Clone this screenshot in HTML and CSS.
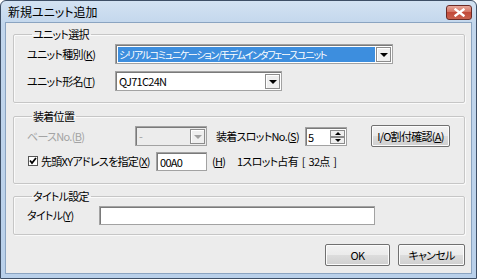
FILE: index.html
```html
<!DOCTYPE html>
<html lang="ja">
<head>
    <meta charset="UTF-8">
    <title>新規ユニット追加</title>
    <link rel="stylesheet" href="styles.css">
</head>
<body>
    <div class="window">
        <div class="titlebar">
            <span class="title">新規ユニット追加</span>
            <span class="close">
                <svg width="11" height="9" viewBox="0 0 11 9">
                    <path d="M1.5 1.5 L9.5 7.5 M9.5 1.5 L1.5 7.5" stroke="#fff" stroke-width="2.4" stroke-linecap="square"/>
                </svg>
            </span>
        </div>
        <div class="client">
            <!-- ユニット選択 -->
            <fieldset class="group g-unit">
                <legend>ユニット選択</legend>
                <div class="row">
                    <span class="label w-unit">ユニット種別(<u>K</u>)</span>
                    <div class="combo combo-type">
                        <span class="combo-text selected">シリアルコミュニケーション/モデムインタフェースユニット</span>
                        <span class="drop"><i class="tri"></i></span>
                    </div>
                </div>
                <div class="row">
                    <span class="label w-unit">ユニット形名(<u>T</u>)</span>
                    <div class="combo combo-model">
                        <span class="combo-text">QJ71C24N</span>
                        <span class="drop"><i class="tri"></i></span>
                    </div>
                </div>
            </fieldset>

            <!-- 装着位置 -->
            <fieldset class="group g-pos">
                <legend>装着位置</legend>
                <div class="row row-slot">
                    <span class="label w-base disabled">ベースNo.(<u>B</u>)</span>
                    <div class="combo combo-base is-disabled">
                        <span class="combo-text">-</span>
                        <span class="drop"><i class="tri"></i></span>
                    </div>
                    <span class="label w-slot">装着スロットNo.(<u>S</u>)</span>
                    <div class="spin">
                        <span class="spin-text">5</span>
                        <span class="spin-btns">
                            <span class="spin-btn"><i class="tri-up"></i></span>
                            <span class="spin-btn"><i class="tri"></i></span>
                        </span>
                    </div>
                    <button class="btn btn-io">I/O割付確認(<u>A</u>)</button>
                </div>
                <div class="row">
                    <span class="check">
                        <svg width="8" height="8" viewBox="0 0 8 8">
                            <path d="M1 3.5 L3 6 L7 1" fill="none" stroke="#000" stroke-width="1.8"/>
                        </svg>
                    </span>
                    <span class="label w-head">先頭XYアドレスを指定(<u>X</u>)</span>
                    <div class="field field-addr">00A0</div>
                    <span class="label w-hex">(<u>H</u>)</span>
                    <span class="label occupy">1スロット占有 [ 32点 ]</span>
                </div>
            </fieldset>

            <!-- タイトル設定 -->
            <fieldset class="group g-title">
                <legend>タイトル設定</legend>
                <div class="row">
                    <span class="label w-title">タイトル(<u>Y</u>)</span>
                    <div class="field field-title"></div>
                </div>
            </fieldset>

            <div class="actions">
                <button class="btn btn-ok">OK</button>
                <button class="btn btn-cancel">キャンセル</button>
            </div>
        </div>
    </div>
</body>
</html>
```

FILE: styles.css
```css
* {
    box-sizing: border-box;
}
body {
    margin: 0;
    background: #fff;
    font-family: "Noto Sans CJK JP", "Liberation Sans", sans-serif;
    font-size: 11px;
    font-feature-settings: "palt";
    letter-spacing: -0.7px;
    color: #000;
}
u {
    text-decoration: underline;
}
.window {
    width: 477px;
    height: 279px;
    border: 1px solid #3e4f66;
    border-radius: 6px 6px 0 0;
    background: linear-gradient(#d3e2f2, #c2d6ec 24px, #b9d0ea);
    padding: 0 4px 4px;
    display: flex;
    flex-direction: column;
}
.titlebar {
    height: 21px;
    display: flex;
    align-items: center;
    justify-content: space-between;
    padding: 0 0 0 3px;
}
.title {
    font-size: 12px;
    line-height: 14px;
    letter-spacing: 0;
}
.close {
    width: 26px;
    height: 15px;
    margin-top: 1px;
    border: 1px solid #6a2a26;
    border-radius: 3px;
    background: linear-gradient(#e8a89b, #d47464 45%, #c24a3a 50%, #c9624f);
    display: flex;
    align-items: center;
    justify-content: center;
}
.client {
    flex: 1;
    background: #ececec;
    border: 1px solid #8ba4c1;
    padding: 4px 6px 0 7px;
    display: flex;
    flex-direction: column;
}
/* グループ枠 */
.group {
    margin: 0;
    min-width: 0;
    border: 1px solid #c6c6c6;
    border-radius: 2px;
    box-shadow: inset 1px 1px 0 #fafafa, 1px 1px 0 #fafafa;
    padding: 3px 0 11px 13px;
    display: flex;
    flex-direction: column;
    gap: 7px;
}
.group legend {
    margin-left: 5px;
    padding: 0 2px 0 1px;
    font-size: 11px;
    line-height: 14px;
}
.g-pos {
    margin-top: 6px;
    padding-top: 2px;
    padding-bottom: 12px;
    gap: 4px;
}
.g-title {
    margin-top: 5px;
    padding-top: 2px;
    padding-bottom: 9px;
}
.row {
    height: 20px;
    display: flex;
    align-items: center;
}
.row-slot {
    height: 22px;
}
.label {
    white-space: nowrap;
    line-height: 14px;
}
.occupy {
    word-spacing: 2px;
}
.disabled {
    color: #a3a3a3;
}
.w-unit {
    width: 88px;
}
.w-base {
    width: 108px;
}
.w-slot {
    width: 89px;
    margin-left: 9px;
}
.w-head {
    width: 115px;
}
.w-hex {
    width: 25px;
    margin-left: 5px;
}
.w-title {
    width: 72px;
}
/* コンボボックス */
.combo {
    height: 20px;
    display: flex;
    border: 1px solid #a2a2a2;
    box-shadow: inset 1px 1px 0 #7a7a7a;
    background: #fff;
    padding: 2px 1px 1px 2px;
}
.combo-type {
    width: 278px;
}
.combo-model {
    width: 167px;
}
.combo-base {
    width: 72px;
}
.combo-text {
    flex: 1;
    line-height: 15px;
    padding-left: 1px;
    white-space: nowrap;
    overflow: hidden;
}
.selected {
    background: #3d8ede;
    color: #fff;
    font-size: 10px;
    letter-spacing: -1.3px;
}
.drop {
    width: 15px;
    margin-left: 1px;
    background: #efefef;
    border: 1px solid #8c8c8c;
    box-shadow: inset 1px 1px 0 #fff;
    display: flex;
    align-items: center;
    justify-content: center;
}
.tri {
    width: 0;
    height: 0;
    border-left: 4px solid transparent;
    border-right: 4px solid transparent;
    border-top: 4px solid #000;
}
.tri-up {
    width: 0;
    height: 0;
    border-left: 3px solid transparent;
    border-right: 3px solid transparent;
    border-bottom: 3px solid #000;
}
.spin-btn .tri {
    border-left-width: 3px;
    border-right-width: 3px;
    border-top-width: 3px;
}
.is-disabled {
    background: #ececec;
    color: #a0a0a0;
}
.is-disabled .tri {
    border-top-color: #a0a0a0;
}
/* スピン */
.spin {
    width: 42px;
    height: 19px;
    display: flex;
    border: 1px solid #a2a2a2;
    box-shadow: inset 1px 1px 0 #7a7a7a;
    background: #fff;
    padding: 2px 1px 1px 2px;
}
.spin-text {
    flex: 1;
    line-height: 14px;
}
.spin-btns {
    width: 15px;
    display: flex;
    flex-direction: column;
}
.spin-btn {
    flex: 1;
    background: #efefef;
    border: 1px solid #8c8c8c;
    display: flex;
    align-items: center;
    justify-content: center;
}
/* テキスト入力 */
.field {
    height: 19px;
    border: 1px solid #a2a2a2;
    box-shadow: inset 1px 1px 0 #7a7a7a;
    background: #fff;
    padding: 2px 3px;
    line-height: 14px;
}
.field-addr {
    width: 51px;
}
.field-title {
    width: 276px;
}
/* チェック */
.check {
    width: 10px;
    height: 10px;
    margin-left: 1px;
    margin-right: 3px;
    border: 1px solid #555;
    background: #fff;
    display: flex;
    align-items: center;
    justify-content: center;
}
/* ボタン */
.btn {
    height: 22px;
    padding: 0;
    font: inherit;
    letter-spacing: -0.7px;
    border: 1px solid #707070;
    border-radius: 2px;
    background: linear-gradient(#f2f2f2, #ebebeb 50%, #dddddd 50%, #cfcfcf);
    box-shadow: inset 0 0 0 1px #fcfcfc;
    color: #000;
}
.btn-io {
    width: 79px;
    margin-left: 24px;
}
.actions {
    margin-top: 9px;
    display: flex;
    justify-content: flex-end;
    gap: 8px;
}
.btn-ok {
    width: 65px;
}
.btn-cancel {
    width: 67px;
}
```
